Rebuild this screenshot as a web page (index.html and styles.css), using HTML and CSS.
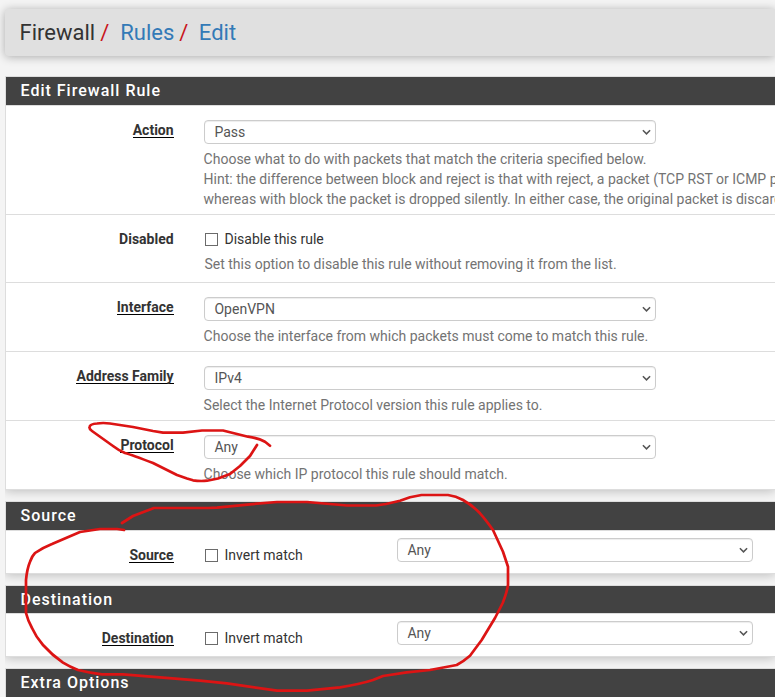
FILE: index.html
```html
<!DOCTYPE html>
<html lang="en">
<head>
<meta charset="utf-8">
<title>Firewall: Rules: Edit</title>
<link rel="stylesheet" href="styles.css">
</head>
<body>
<header class="page-header">
  <span>Firewall</span><span class="sep">/</span><a>Rules</a><span class="sep">/</span><a>Edit</a>
</header>

<section class="panel">
  <h2 class="panel-title">Edit Firewall Rule</h2>
  <div class="row row-action">
    <div class="label"><span class="required">Action</span></div>
    <div class="field">
      <div class="select"><span>Pass</span><svg class="chevron" viewBox="0 0 10 6"><path d="M1 1l4 4 4-4"/></svg></div>
      <p class="help">Choose what to do with packets that match the criteria specified below.<br>Hint: the difference between block and reject is that with reject, a packet (TCP RST or ICMP p<br>whereas with block the packet is dropped silently. In either case, the original packet is discard</p>
    </div>
  </div>
  <div class="row row-disabled">
    <div class="label"><span>Disabled</span></div>
    <div class="field">
      <div class="check"><i class="box"></i>Disable this rule</div>
      <p class="help">Set this option to disable this rule without removing it from the list.</p>
    </div>
  </div>
  <div class="row">
    <div class="label"><span class="required">Interface</span></div>
    <div class="field">
      <div class="select"><span>OpenVPN</span><svg class="chevron" viewBox="0 0 10 6"><path d="M1 1l4 4 4-4"/></svg></div>
      <p class="help">Choose the interface from which packets must come to match this rule.</p>
    </div>
  </div>
  <div class="row">
    <div class="label"><span class="required">Address Family</span></div>
    <div class="field">
      <div class="select"><span>IPv4</span><svg class="chevron" viewBox="0 0 10 6"><path d="M1 1l4 4 4-4"/></svg></div>
      <p class="help">Select the Internet Protocol version this rule applies to.</p>
    </div>
  </div>
  <div class="row">
    <div class="label"><span class="required">Protocol</span></div>
    <div class="field">
      <div class="select"><span>Any</span><svg class="chevron" viewBox="0 0 10 6"><path d="M1 1l4 4 4-4"/></svg></div>
      <p class="help">Choose which IP protocol this rule should match.</p>
    </div>
  </div>
</section>

<section class="panel">
  <h2 class="panel-title">Source</h2>
  <div class="row row-address">
    <div class="label"><span class="required">Source</span></div>
    <div class="check"><i class="box"></i>Invert match</div>
    <div class="select"><span>Any</span><svg class="chevron" viewBox="0 0 10 6"><path d="M1 1l4 4 4-4"/></svg></div>
  </div>
</section>

<section class="panel">
  <h2 class="panel-title short">Destination</h2>
  <div class="row row-address">
    <div class="label"><span class="required">Destination</span></div>
    <div class="check"><i class="box"></i>Invert match</div>
    <div class="select"><span>Any</span><svg class="chevron" viewBox="0 0 10 6"><path d="M1 1l4 4 4-4"/></svg></div>
  </div>
</section>

<section class="panel">
  <h2 class="panel-title">Extra Options</h2>
</section>

<svg class="markup" viewBox="0 0 775 697" width="775" height="697">
  <path d="M270 445.7L265 441.7Q258 438 248 436.7L223 430.5H202L183 432.7H163L153 431L133 427L110 423.5Q103 422.500 97 423.5Q90 424 89.500 427Q89 429 92 431L113 446Q118 450 125 453Q132 455 153 463L177 475L187 478.500L193 480.300Q200 481.500 207 480.700L218 478.500L230 474L240 466L250 456L257 445"/>
  <path d="M122 523L133 516L154 508H208L217 507.700L250 504.300L277 502H307L347 505.500H376L386 504L400 500.700L410 497.300L421.500 495H448Q456 496 463 500Q472 505 480 513.300Q486 520 493 530L503 551.700L508 566.700V585Q507 592 502.700 603L495 618L481.700 640L470 655.700Q464 661 456.700 665L430 670L406.700 672.300L383 676L373 680Q359 684.500 340 687.300L307 690.700H277L227 683.300L200 680.700L123 674.300H102Q90 673 78 670Q70 667 63 662.700Q52 655 43 645Q36 637 32 628Q28 621 26 613V580Q27 569 30 561.700Q32 556 35 553Q42 548 52 544L80 532L100 529H117L124 530"/>
</svg>
</body>
</html>
```
FILE: styles.css
```css
* {
  box-sizing: border-box;
}

html {
  overflow: hidden;
}

body {
  margin: 0;
  padding: 9px 0 0 5px;
  height: 697px;
  overflow: hidden;
  background: #f4f4f4;
  color: #333;
  font: 14px/20px Roboto, sans-serif;
}

.page-header {
  display: flex;
  align-items: center;
  height: 47px;
  margin-bottom: 20px;
  padding: 1px 14.5px 0;
  border-radius: 4px 0 0 4px;
  background: #e0e0e0;
  box-shadow: 0 1px 10px rgba(0, 0, 0, .3);
  font-size: 22px;
}

.page-header a {
  color: #337ab7;
}

.sep {
  margin: 0 11px 0 5px;
  color: #c9151b;
}

.page-header a:last-child {
  margin-left: -.5px;
}

.panel {
  margin-bottom: 11px;
  border: 1px solid #ddd;
  border-right: 0;
  background: #fff;
  box-shadow: 0 1px 10px rgba(0, 0, 0, .24);
  clip-path: inset(0 0 -11px 0);
}

.panel-title {
  height: 29px;
  margin: 0;
  padding: 0 14.5px;
  border-bottom: 1px solid #ddd;
  background: #424242;
  background-clip: padding-box;
  color: #fff;
  font-size: 16px;
  font-weight: 500;
  line-height: 27px;
  letter-spacing: 1px;
}

.panel-title.short {
  height: 28px;
}

.row {
  display: flex;
  height: 69px;
  padding-top: 14px;
  border-bottom: 1px solid #ddd;
}

.row:last-child {
  height: 68px;
  border-bottom: 0;
}

.row.row-action {
  height: 109px;
}

.row.row-disabled {
  height: 68px;
}

.label {
  flex: none;
  width: 167.6px;
  margin-right: 30.4px;
  text-align: right;
  font-weight: 700;
}

.required {
  display: inline-block;
  height: 18px;
  border-bottom: 1px solid #000;
}

.field {
  flex: 1;
  min-width: 0;
}

.select {
  display: flex;
  align-items: center;
  justify-content: space-between;
  width: 452px;
  height: 24px;
  padding: 0 3.500px 0 9.500px;
  border: 1px solid #ccc;
  border-radius: 4px;
  box-shadow: inset 0 1px 1px rgba(0, 0, 0, .075);
  color: #555;
}

.chevron {
  width: 9px;
  height: 6px;
  fill: none;
  stroke: #555;
  stroke-width: 1.7;
}

.help {
  margin: 5px 0 0 -.4px;
  color: #737373;
  white-space: nowrap;
}

.check {
  display: flex;
  align-items: center;
  margin-left: 1px;
}

.box {
  flex: none;
  width: 13px;
  height: 13px;
  margin-right: 6.500px;
  border: 1px solid #6b6b6b;
}

.row-disabled .help {
  margin-left: .5px;
}

.row.row-address {
  height: 42px;
}

.row-address {
  align-items: flex-start;
}

.row-address .check {
  width: 192px;
}

.row-address .select {
  width: 356px;
  margin-top: -7px;
}

.markup {
  position: absolute;
  top: 0;
  left: 0;
  fill: none;
  stroke: #dc1414;
  stroke-width: 2.7;
  stroke-linecap: round;
  stroke-linejoin: round;
}
```
